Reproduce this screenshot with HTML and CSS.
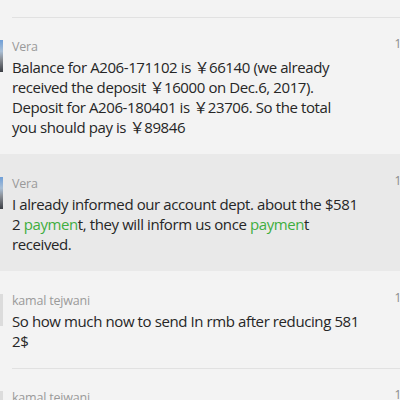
FILE: index.html
```html
<!DOCTYPE html>
<html lang="en">
<head>
  <meta charset="UTF-8" />
  <meta name="viewport" content="width=device-width, initial-scale=1.0" />
  <title>Chat</title>
  <link rel="stylesheet" href="styles.css">
</head>
<body>
  <div class="pane">
    <div class="msg">
      <div class="avatar avatar-vera"></div>
      <div class="msg-body">
        <div class="msg-head">
          <span class="name">Vera</span>
          <span class="time">11:02</span>
        </div>
        <div class="text">Balance for A206-171102 is <span class="yen">￥</span>66140 (we already<br>received the deposit <span class="yen">￥</span>16000 on Dec.6, 2017).<br>Deposit for A206-180401 is <span class="yen">￥</span>23706. So the total<br>you should pay is <span class="yen">￥</span>89846</div>
      </div>
    </div>
    <div class="msg active">
      <div class="avatar avatar-vera"></div>
      <div class="msg-body">
        <div class="msg-head">
          <span class="name">Vera</span>
          <span class="time">11:04</span>
        </div>
        <div class="text">I already informed our account dept. about the $581<br>2 <span class="hl">paymen</span>t, they will inform us once <span class="hl">paymen</span>t<br>received.</div>
      </div>
    </div>
    <div class="msg">
      <div class="avatar avatar-kamal"></div>
      <div class="msg-body">
        <div class="msg-head">
          <span class="name">kamal tejwani</span>
          <span class="time">11:10</span>
        </div>
        <div class="text">So how much now to send In rmb after reducing 581<br>2$</div>
      </div>
    </div>
    <div class="msg">
      <div class="avatar avatar-kamal"></div>
      <div class="msg-body">
        <div class="msg-head">
          <span class="name">kamal tejwani</span>
          <span class="time">11:12</span>
        </div>
        <div class="text">ok</div>
      </div>
    </div>
  </div>
</body>
</html>
```

FILE: styles.css
```css
:root {
  --bg: #f3f3f3;
  --active: #e9e9e9;
  --line: #e1e1e1;
  --text: #262626;
  --muted: #9a9a9a;
  --green: #3fae3f;
}
* {
  box-sizing: border-box;
}
body {
  margin: 0;
  background-color: var(--bg);
  color: var(--text);
  font-family: "Open Sans", "Noto Sans", sans-serif;
  overflow: hidden;
}
.pane {
  width: 470px;
  margin-left: -37px;
  padding-top: 17px;
}
.msg {
  display: flex;
  gap: 9px;
  padding: 0 8px 0 8px;
}
.msg.active {
  background-color: var(--active);
}
.avatar {
  flex: none;
  width: 32px;
  height: 32px;
  margin-top: 23px;
}
.avatar-vera {
  background: linear-gradient(#6f9fd8 0%, #a9bfd6 35%, #8a8f96 60%, #3b3e44 100%);
}
.avatar-kamal {
  background-color: #dcdcdc;
}
.msg-body {
  flex: 1;
  border-top: 1px solid var(--line);
  padding: 21px 0 17px;
}
.msg.active .msg-body,
.msg.active + .msg .msg-body {
  border-top-color: transparent;
}
.msg-head {
  display: flex;
  justify-content: space-between;
  height: 16px;
  line-height: 16px;
  margin-bottom: 2px;
}
.name {
  font-size: 12.5px;
  letter-spacing: -0.2px;
  color: var(--muted);
}
.time {
  font-size: 12px;
  color: #8a8a8a;
  margin-top: -3px;
}
.text {
  font-size: 15px;
  line-height: 20px;
  letter-spacing: -0.4px;
  white-space: nowrap;
}
.yen {
  font-family: "Noto Sans CJK SC", sans-serif;
}
.hl {
  color: var(--green);
}
```
